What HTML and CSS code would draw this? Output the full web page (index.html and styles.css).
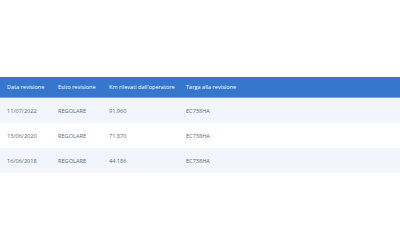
FILE: index.html
```html
<!DOCTYPE html>
<html lang="it">
<head>
<meta charset="utf-8">
<link rel="stylesheet" href="styles.css">
</head>
<body>
<div class="page">
  <div class="table">
    <div class="row head">
      <div class="cell">Data revisione</div>
      <div class="cell">Esito revisione</div>
      <div class="cell">Km rilevati dall'operatore</div>
      <div class="cell">Targa alla revisione</div>
    </div>
    <div class="row alt">
      <div class="cell">11/07/2022</div>
      <div class="cell">REGOLARE</div>
      <div class="cell">91.960</div>
      <div class="cell">EC738HA</div>
    </div>
    <div class="row">
      <div class="cell">13/06/2020</div>
      <div class="cell">REGOLARE</div>
      <div class="cell">71.870</div>
      <div class="cell">EC738HA</div>
    </div>
    <div class="row alt">
      <div class="cell">16/06/2018</div>
      <div class="cell">REGOLARE</div>
      <div class="cell">44.186</div>
      <div class="cell">EC738HA</div>
    </div>
  </div>
</div>
</body>
</html>
```

FILE: styles.css
```css
html, body {
  margin: 0;
  padding: 0;
  background: #ffffff;
}
.page {
  width: 400px;
  height: 250px;
  padding-top: 77px;
  box-sizing: border-box;
  font-family: "Open Sans", "Liberation Sans", sans-serif;
}
.table {
  display: flex;
  flex-direction: column;
}
.row {
  display: grid;
  grid-template-columns: 51px 51px 77px 1fr;
  padding-left: 7px;
  height: 25px;
  align-items: center;
  font-size: 5.6px;
  color: #5c6873;
}
.row.head {
  height: 20px;
  background: #3677cd;
  color: #ffffff;
  border-bottom: 1.5px solid #7aa6e0;
  box-sizing: content-box;
}
.row.alt {
  background: #f2f6fc;
}
.cell {
  white-space: nowrap;
}
```
